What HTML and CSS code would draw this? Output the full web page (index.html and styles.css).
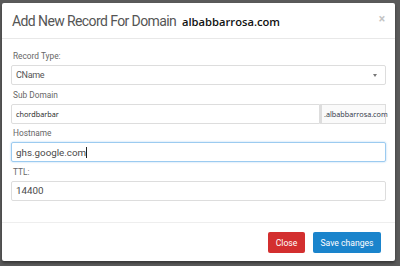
FILE: index.html
```html
<!DOCTYPE html>
<html lang="en">

<head>
    <meta charset="UTF-8">
    <meta name="viewport" content="width=device-width, initial-scale=1.0">
    <title>Add New Record</title>
    <link rel="stylesheet" href="styles.css">
</head>

<body>
    <div class="modal">
        <div class="modal-header">
            <h4 class="modal-title">Add New Record For Domain <span class="domain">albabbarrosa.com</span></h4>
            <span class="close-x">&times;</span>
        </div>

        <div class="modal-body">
            <div class="field">
                <label>Record Type:</label>
                <div class="select">
                    <span>CName</span>
                    <span class="caret"></span>
                </div>
            </div>
            <div class="field">
                <label>Sub Domain</label>
                <div class="input-group">
                    <div class="input small">chordbarbar</div>
                    <div class="addon">.albabbarrosa.com</div>
                </div>
            </div>
            <div class="field">
                <label>Hostname</label>
                <div class="input focus">ghs.google.com<span class="cursor"></span></div>
            </div>
            <div class="field">
                <label>TTL:</label>
                <div class="input">14400</div>
            </div>
        </div>

        <div class="modal-footer">
            <button class="btn btn-red">Close</button>
            <button class="btn btn-blue">Save changes</button>
        </div>
    </div>
</body>

</html>
```

FILE: styles.css
```css
body {
    margin: 0;
    padding: 3px 5px 0 2px;
    background-color: #5a5a5a;
    font-family: Roboto, 'Liberation Sans', sans-serif;
    height: 266px;
    box-sizing: border-box;
    overflow: hidden;
}

.modal {
    background-color: white;
    height: 258px;
    border-radius: 2px;
    display: flex;
    flex-direction: column;
    box-shadow: 0 2px 3px rgba(0, 0, 0, 0.4);
}

.modal-header {
    display: flex;
    justify-content: space-between;
    align-items: center;
    height: 35px;
    padding: 0 9px 0 10px;
    border-bottom: 1px solid #e8e8e8;
}

.modal-title {
    margin: 0;
    font-size: 14px;
    font-weight: 400;
    letter-spacing: -0.6px;
    color: #555;
}

.domain {
    font-family: 'Open Sans', sans-serif;
    font-size: 11.2px;
    font-weight: 600;
    letter-spacing: 0;
    color: #111;
    margin-left: 3px;
}

.close-x {
    color: #c4c4c4;
    font-size: 12px;
    font-weight: bold;
    margin: -4px 1px 0 0;
}

.modal-body {
    padding: 12px 9px 0 9px;
    display: flex;
    flex-direction: column;
    gap: 4.5px;
}

.field label {
    display: block;
    font-size: 8.3px;
    line-height: 10px;
    color: #666;
    margin: 0 0 4px 2px;
}

.select,
.input {
    height: 20px;
    border: 1px solid #ddd;
    border-radius: 2px;
    box-sizing: border-box;
    display: flex;
    align-items: center;
    padding: 0 4px;
    font-size: 9.8px;
    color: #4a4a4a;
}

.select {
    justify-content: space-between;
    font-size: 9px;
    letter-spacing: -0.3px;
    color: #555;
}

.caret {
    width: 0;
    height: 0;
    border-left: 2.5px solid transparent;
    border-right: 2.5px solid transparent;
    border-top: 3px solid #777;
    margin-right: 4px;
}

.input-group {
    display: flex;
}

.input-group .input {
    flex: 1;
    border-radius: 2px 0 0 2px;
}

.small {
    font-family: 'Open Sans', sans-serif;
    font-size: 7.3px;
    color: #222;
}

.addon {
    width: 66px;
    height: 20px;
    box-sizing: border-box;
    border: 1px solid #ddd;
    border-left: 2px solid #ddd;
    display: flex;
    align-items: center;
    padding-left: 2px;
    font-family: 'Open Sans', sans-serif;
    font-size: 7.3px;
    color: #2d3344;
    background-color: #fafafa;
    white-space: nowrap;
}

.input.focus {
    border-color: #9ccbf0;
    box-shadow: 0 0 2px rgba(102, 175, 233, 0.6);
}

.cursor {
    display: inline-block;
    width: 1px;
    height: 11px;
    background-color: #222;
}

.modal-footer {
    margin-top: auto;
    border-top: 1px solid #eee;
    height: 39px;
    box-sizing: border-box;
    display: flex;
    justify-content: flex-end;
    align-items: flex-start;
    gap: 8px;
    padding: 9px 14px 0 0;
}

.btn {
    height: 21px;
    border: none;
    border-radius: 2px;
    color: white;
    font-family: inherit;
    font-size: 8.6px;
    padding: 0;
}

.btn-red {
    background-color: #d32f2f;
    width: 37px;
}

.btn-blue {
    background-color: #1a84cc;
    width: 68px;
}
```
